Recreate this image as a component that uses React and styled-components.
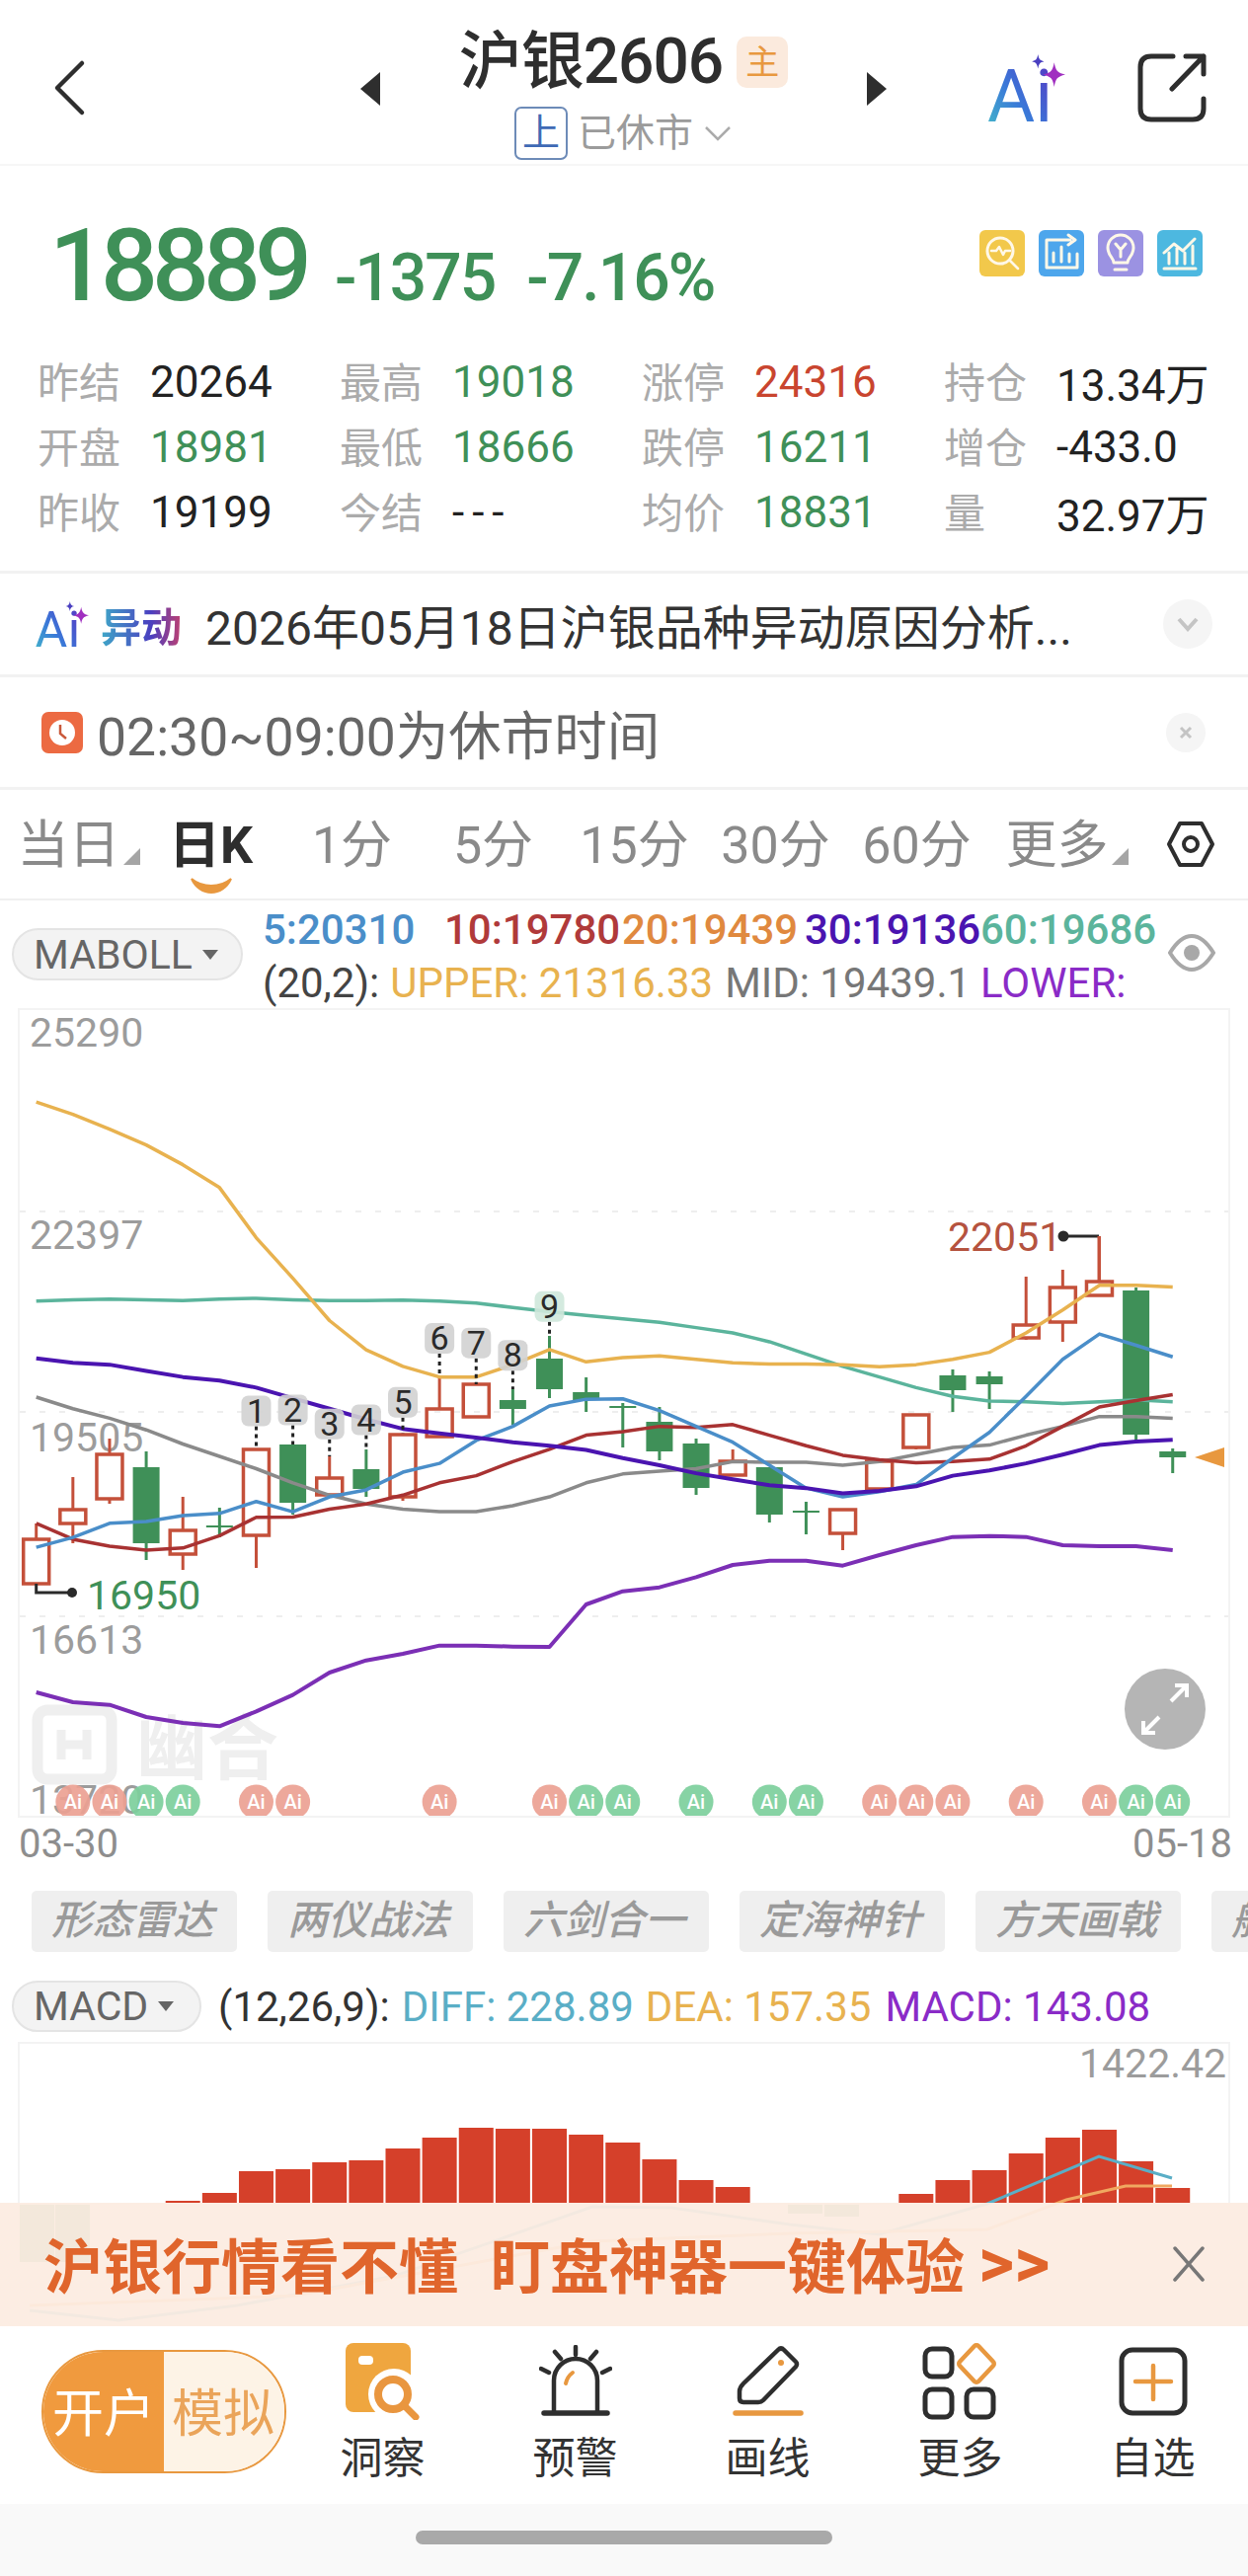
import React from 'react';
import styled, { createGlobalStyle } from 'styled-components';

const GlobalStyle = createGlobalStyle`
  html, body {
    margin: 0;
    padding: 0;
    background: #fff;
  }
  * {
    box-sizing: border-box;
  }
`;

const GREEN = '#3f9058';
const RED = '#c4503a';
const ORANGE = '#e8983f';
const DARK = '#2e2e2e';

const Page = styled.div`
  position: relative;
  width: 1264px;
  height: 2609px;
  overflow: hidden;
  display: flex;
  flex-direction: column;
  background: #fff;
  font-family: Roboto, "Noto Sans CJK SC", sans-serif;
  color: #222;
`;

/* header */
const Header = styled.div`
  height: 168px;
  flex: none;
  display: flex;
  align-items: center;
  border-bottom: 2px solid #f6f6f6;
`;

const BackBox = styled.div`
  width: 365px;
  padding: 12px 0 0 52px;
  display: flex;
`;

const SwitchArrow = styled.svg`
  margin-top: 14px;
  flex: none;
`;

const TitleBox = styled.div`
  flex: 1;
  height: 100%;
  padding-top: 33px;
  display: flex;
  flex-direction: column;
  align-items: center;
`;

const TitleRow = styled.div`
  height: 60px;
  display: flex;
  align-items: center;
  gap: 14px;
`;

const Title = styled.div`
  font-size: 64px;
  font-weight: 500;
  line-height: 60px;
  color: ${DARK};
  letter-spacing: -1px;
`;

const MainTag = styled.div`
  width: 52px;
  height: 52px;
  border-radius: 10px;
  background: #fbeadd;
  color: ${ORANGE};
  font-size: 34px;
  line-height: 52px;
  text-align: center;
`;

const SubRow = styled.div`
  margin-top: 15px;
  display: flex;
  align-items: center;
  gap: 10px;
  color: #9b9b9b;
  font-size: 39px;
  line-height: 54px;
`;

const ExchangeTag = styled.div`
  width: 54px;
  height: 54px;
  border: 2px solid #6d8bb8;
  border-radius: 7px;
  color: #3f6ab5;
  font-size: 38px;
  line-height: 48px;
  text-align: center;
`;

const HeaderIcons = styled.div`
  display: flex;
  align-items: center;
  padding: 12px 42px 0 103px;
  gap: 73px;
`;

/* quote */
const Quote = styled.div`
  height: 413px;
  flex: none;
  border-bottom: 3px solid #f2f2f2;
`;

const PriceRow = styled.div`
  height: 186px;
  padding: 46px 46px 0 50px;
  display: flex;
  align-items: flex-start;
  justify-content: space-between;
`;

const PriceGroup = styled.div`
  display: flex;
  align-items: baseline;
  color: ${GREEN};
  font-weight: 500;
`;

const Price = styled.div`
  font-size: 102px;
  line-height: 110px;
  letter-spacing: -6px;
`;

const Change = styled.div`
  margin-left: ${(p) => p.$gap}px;
  font-size: 66px;
  line-height: 70px;
  letter-spacing: -2px;
`;

const QuickIcons = styled.div`
  margin-top: 19px;
  display: flex;
  gap: 14px;
`;

const StatsGrid = styled.div`
  padding-left: 38px;
  display: grid;
  grid-template-columns: repeat(4, 306px);
  grid-auto-rows: 66px;
`;

const Stat = styled.div`
  display: flex;
  align-items: center;
`;

const StatLabel = styled.div`
  width: 114px;
  margin-bottom: 6px;
  font-size: 42px;
  color: #ababab;
`;

const StatValue = styled.div`
  font-size: 44px;
  color: ${(p) => p.$color};
  letter-spacing: ${(p) => (p.$spread ? '8px' : '0')};
`;

/* notice rows */
const NoticeRow = styled.div`
  height: ${(p) => p.$height}px;
  flex: none;
  padding-left: ${(p) => p.$left}px;
  display: flex;
  align-items: center;
  position: relative;
  border-bottom: 3px solid #f2f2f2;
`;

const AbnormalTag = styled.div`
  margin-left: 12px;
  font-size: 41px;
  font-weight: 700;
  background: linear-gradient(90deg, #3fa8c8 0%, #4a3fc0 62%, #c04070 100%);
  -webkit-background-clip: text;
  background-clip: text;
  color: transparent;
`;

const NoticeText = styled.div`
  margin-left: 24px;
  font-size: 48px;
  color: #333;
  white-space: nowrap;
`;

const ClosedText = styled.div`
  margin-left: 14px;
  font-size: 53.5px;
  color: #666;
  white-space: nowrap;
`;

const RoundButton = styled.div`
  position: absolute;
  right: ${(p) => p.$right}px;
  top: 50%;
  transform: translateY(-50%);
  width: ${(p) => p.$size}px;
  height: ${(p) => p.$size}px;
  border-radius: 50%;
  background: #f5f5f5;
  display: flex;
  align-items: center;
  justify-content: center;
`;

/* period tabs */
const Tabs = styled.div`
  height: 112px;
  flex: none;
  padding: 0 0 0 6px;
  display: flex;
  align-items: center;
  border-bottom: 2px solid #f0f0f0;
`;

const Tab = styled.div`
  position: relative;
  width: ${(p) => p.$width}px;
  height: 100%;
  padding-bottom: 8px;
  display: flex;
  align-items: center;
  justify-content: center;
  font-size: 52px;
  color: ${(p) => (p.$active ? DARK : '#8a8a8a')};
  font-weight: ${(p) => (p.$active ? 700 : 400)};
  white-space: nowrap;
`;

const TabLabel = styled.span`
  position: relative;
  margin-left: ${(p) => (p.$menu ? 10 : 0)}px;
  margin-right: ${(p) => (p.$menu ? 19 : 0)}px;
`;

const CornerMark = styled.span`
  position: absolute;
  right: -20px;
  bottom: 13px;
  width: 0;
  height: 0;
  border-left: 17px solid transparent;
  border-bottom: 17px solid #a5a5a5;
`;

const Smile = styled.svg`
  position: absolute;
  left: 50%;
  bottom: 3px;
  transform: translateX(-50%);
`;

const HexBox = styled.div`
  margin-left: 31px;
  display: flex;
`;

/* indicator rows */
const IndicatorRow = styled.div`
  height: 109px;
  flex: none;
  position: relative;
  padding-left: 266px;
  padding-top: 2px;
`;

const SelectPill = styled.div`
  position: absolute;
  left: ${(p) => p.$left}px;
  top: ${(p) => p.$top}px;
  width: ${(p) => p.$width}px;
  height: ${(p) => p.$height}px;
  border-radius: 27px;
  background: #f3f3f3;
  border: 2px solid #e4e4e4;
  padding-left: 20px;
  display: flex;
  align-items: center;
  gap: 10px;
  font-size: 41px;
  color: #666;
`;

const PillCaret = styled.span`
  width: 0;
  height: 0;
  border-left: 8px solid transparent;
  border-right: 8px solid transparent;
  border-top: 10px solid #666;
`;

const ValueLine = styled.div`
  height: 54px;
  display: flex;
  align-items: center;
  font-size: ${(p) => p.$size}px;
  font-weight: ${(p) => p.$weight || 400};
  white-space: nowrap;
`;

const MaValue = styled.span`
  width: ${(p) => p.$width}px;
  color: ${(p) => p.$color};
`;

const ParamValue = styled.span`
  margin-right: ${(p) => p.$gap || 0}px;
  color: ${(p) => p.$color};
`;

const EyeBox = styled.div`
  position: absolute;
  right: 33px;
  top: 33px;
  display: flex;
`;

/* charts */
const ChartBox = styled.div`
  height: ${(p) => p.$height}px;
  margin: 0 18px;
  flex: none;
  border: 2px solid #f3f3f3;
  overflow: hidden;
`;

const ChartSvg = styled.svg`
  display: block;
`;

const AxisText = styled.text`
  font-family: Roboto, sans-serif;
  font-size: 41px;
  fill: #9c9c9c;
`;

const PriceMark = styled.text`
  font-family: Roboto, sans-serif;
  font-size: 41px;
  fill: ${(p) => p.$color};
`;

const SeqText = styled.text`
  font-family: Roboto, sans-serif;
  font-size: 34px;
  fill: #2a2a2a;
  text-anchor: middle;
`;

const BadgeText = styled.text`
  font-family: Roboto, sans-serif;
  font-size: 20px;
  font-weight: 500;
  fill: #fff;
  text-anchor: middle;
`;

const Watermark = styled.text`
  font-family: "Noto Sans CJK SC", sans-serif;
  font-size: 72px;
  font-weight: 700;
  fill: #efefef;
`;

const DateRow = styled.div`
  height: 52px;
  flex: none;
  padding: 0 16px 0 19px;
  display: flex;
  align-items: center;
  justify-content: space-between;
  font-size: 40px;
  color: #8e8e8e;
`;

const ChipRow = styled.div`
  height: 84px;
  flex: none;
  padding: 22px 0 0 32px;
  display: flex;
  gap: 31px;
  overflow: hidden;
`;

const Chip = styled.div`
  width: 208px;
  height: 62px;
  flex: none;
  padding-left: 20px;
  border-radius: 5px;
  background: #efefef;
  color: #9a9a9a;
  font-size: 41px;
  font-style: italic;
  font-weight: 500;
  line-height: 60px;
  white-space: nowrap;
`;

const MacdRow = styled.div`
  height: 91px;
  flex: none;
  position: relative;
  padding: 28px 0 0 221px;
`;

/* banner over the lower chart */
const Banner = styled.div`
  position: absolute;
  left: 0;
  right: 0;
  bottom: 253px;
  height: 125px;
  padding: 0 0 4px 44px;
  display: flex;
  align-items: center;
  background: rgba(252, 236, 225, 0.95);
  color: #e0652c;
  font-size: 60px;
  font-weight: 700;
  white-space: nowrap;
`;

const BannerGap = styled.span`
  width: 33px;
`;

const BannerMore = styled.span`
  margin-left: 14px;
  font-size: 70px;
  line-height: 70px;
`;

const BannerClose = styled.div`
  position: absolute;
  right: 42px;
  top: 44px;
  display: flex;
`;

/* bottom bar */
const BottomBar = styled.div`
  height: 180px;
  flex: none;
  display: flex;
  background: #fff;
`;

const TradeToggle = styled.div`
  width: 248px;
  height: 125px;
  margin: 24px 0 0 42px;
  flex: none;
  display: flex;
  border: 2px solid ${ORANGE};
  border-radius: 63px;
  overflow: hidden;
  font-size: 52px;
`;

const TogglePart = styled.div`
  width: ${(p) => p.$width}px;
  padding: 0 0 4px ${(p) => p.$pad}px;
  display: flex;
  align-items: center;
  white-space: nowrap;
  background: ${(p) => (p.$on ? '#f09a3e' : '#fdf3e6')};
  color: ${(p) => (p.$on ? '#fff' : '#eaa45a')};
`;

const NavItem = styled.div`
  width: 195px;
  flex: none;
  padding-top: 16px;
  display: flex;
  flex-direction: column;
  align-items: center;
`;

const NavIcon = styled.div`
  height: 80px;
  display: flex;
  align-items: center;
`;

const NavLabel = styled.div`
  margin-top: 8px;
  font-size: 43px;
  line-height: 60px;
  color: #333;
`;

const Footer = styled.div`
  flex: 1;
  background: #f9f9f9;
  padding-top: 27px;
  display: flex;
  justify-content: center;
`;

const HomeBar = styled.div`
  width: 422px;
  height: 14px;
  border-radius: 7px;
  background: #a9a9a9;
`;

/* chart data, y values for the moving averages are taken in zoom units */
const cx = (i) => 36.7 + 37.13 * i;
const zy = (v) => 1000 + v / 2.8;

const MA_LINES = [
  { color: '#5bb49c', width: 3.5, ys: [890, 886, 884, 886, 888, 884, 882, 886, 888, 888, 887, 890, 895, 908, 920, 930, 940, 950, 965, 980, 1005, 1040, 1075, 1105, 1135, 1160, 1173, 1175, 1180, 1175, 1170, 1175] },
  { color: '#8a8a8a', width: 3.5, ys: [1162, 1195, 1222, 1255, 1295, 1330, 1365, 1405, 1440, 1465, 1480, 1487, 1487, 1470, 1445, 1405, 1380, 1372, 1365, 1345, 1347, 1347, 1355, 1345, 1325, 1305, 1298, 1270, 1245, 1217, 1217, 1222] },
  { color: '#a83232', width: 3.5, ys: [1520, 1565, 1585, 1596, 1590, 1555, 1503, 1502, 1480, 1465, 1440, 1405, 1385, 1345, 1310, 1270, 1260, 1245, 1248, 1240, 1270, 1300, 1327, 1340, 1348, 1345, 1338, 1300, 1245, 1190, 1172, 1155] },
  { color: '#4a8ec9', width: 3.5, ys: [1588, 1560, 1520, 1515, 1498, 1492, 1458, 1487, 1445, 1425, 1375, 1350, 1285, 1245, 1187, 1168, 1167, 1200, 1245, 1290, 1355, 1420, 1445, 1430, 1410, 1335, 1262, 1160, 1055, 983, 1015, 1048] },
  { color: '#e8b24f', width: 3.5, ys: [325, 360, 402, 447, 503, 568, 710, 825, 945, 1028, 1075, 1105, 1105, 1070, 1027, 1062, 1050, 1045, 1055, 1065, 1068, 1068, 1070, 1076, 1070, 1055, 1035, 980, 915, 845, 845, 850] },
  { color: '#4a14b0', width: 4, ys: [1052, 1065, 1070, 1088, 1105, 1115, 1135, 1165, 1195, 1225, 1252, 1265, 1277, 1290, 1300, 1312, 1335, 1355, 1378, 1395, 1412, 1420, 1435, 1428, 1415, 1385, 1370, 1350, 1325, 1298, 1288, 1283] },
];

const LOWER_BAND = [462, 492, 500, 537, 555, 565, 520, 470, 402, 365, 345, 320, 320, 323, 324, 195, 155, 143, 112, 75, 62, 62, 77, 45, 15, -10, -13, -10, 15, 18, 18, 30];

// [up, high, top, bottom, low]
const CANDLES = [
  [1, 1543, 1559, 1604, 1604], [1, 1496, 1529, 1543, 1563], [1, 1457, 1473, 1518, 1523], [0, 1470, 1486, 1563, 1580],
  [1, 1516, 1550, 1574, 1590], [0, 1527, 1545, 1547, 1557], [1, 1468, 1468, 1555, 1588], [0, 1463, 1463, 1522, 1534],
  [1, 1475, 1497, 1514, 1514], [0, 1468, 1488, 1508, 1516], [1, 1452, 1453, 1516, 1520], [1, 1393, 1427, 1455, 1455],
  [1, 1402, 1402, 1435, 1435], [0, 1407, 1418, 1427, 1443], [0, 1353, 1376, 1407, 1416], [0, 1395, 1410, 1418, 1430],
  [0, 1421, 1424, 1426, 1466], [0, 1425, 1440, 1470, 1479], [0, 1457, 1462, 1507, 1514], [1, 1468, 1480, 1494, 1494],
  [0, 1486, 1486, 1534, 1542], [0, 1521, 1530, 1532, 1554], [1, 1529, 1529, 1553, 1570], [1, 1478, 1480, 1508, 1512],
  [1, 1433, 1433, 1466, 1468], [0, 1387, 1393, 1408, 1430], [0, 1389, 1394, 1402, 1427], [1, 1293, 1342, 1355, 1357],
  [1, 1286, 1304, 1339, 1359], [1, 1252, 1298, 1312, 1312], [0, 1304, 1307, 1453, 1461], [0, 1467, 1470, 1476, 1492],
];

const SEQ_TOPS = [1158, 1155, 1195, 1183, 1133, 952, 965, 1000, 862];

const AI_BADGES = [
  [1, 1], [2, 1], [3, 0], [4, 0], [6, 1], [7, 1], [11, 1], [14, 1], [15, 0], [16, 0],
  [18, 0], [20, 0], [21, 0], [23, 1], [24, 1], [25, 1], [27, 1], [29, 1], [30, 0], [31, 0],
];

const MACD_BARS = [
  [4, 2229], [5, 2221], [6, 2199], [7, 2197], [8, 2190], [9, 2188], [10, 2176], [11, 2165], [12, 2155], [13, 2156],
  [14, 2156], [15, 2162], [16, 2170], [17, 2187], [18, 2208], [19, 2215], [24, 2222], [25, 2208], [26, 2198],
  [27, 2181], [28, 2165], [29, 2157], [30, 2189], [31, 2216],
];

const STATS = [
  ['昨结', '20264', '#222'], ['最高', '19018', GREEN], ['涨停', '24316', '#c9452f'], ['持仓', '13.34万', '#222'],
  ['开盘', '18981', GREEN], ['最低', '18666', GREEN], ['跌停', '16211', GREEN], ['增仓', '-433.0', '#222'],
  ['昨收', '19199', '#222'], ['今结', '---', '#222'], ['均价', '18831', GREEN], ['量', '32.97万', '#222'],
];

const PERIODS = ['当日', '日K', '1分', '5分', '15分', '30分', '60分', '更多'];
const TAB_WIDTHS = [136, 143, 143, 143, 143, 143, 143, 150];
const CHIPS = ['形态雷达', '两仪战法', '六剑合一', '定海神针', '方天画戟', '航'];

const points = (pairs) => pairs.map((p) => p.join(',')).join(' ');

function Candle({ data, i }) {
  const [up, high, top, bottom, low] = data;
  const x = cx(i);
  const color = up ? RED : GREEN;
  return (
    <g>
      <line x1={x} x2={x} y1={high} y2={top} stroke={color} strokeWidth="3" />
      <line x1={x} x2={x} y1={bottom} y2={low} stroke={color} strokeWidth="3" />
      {up ? (
        <rect x={x - 13} y={top} width="26" height={bottom - top} fill="none" stroke={color} strokeWidth="3.5" />
      ) : (
        <rect x={x - 13.5} y={top} width="27" height={bottom - top} fill={color} />
      )}
    </g>
  );
}

function KlineChart() {
  return (
    <ChartSvg width="1224" height="816" viewBox="20 1023 1224 816">
      {[1227, 1430, 1637].map((y) => (
        <line key={y} x1="20" x2="1244" y1={y} y2={y} stroke="#eeeeee" strokeWidth="2" strokeDasharray="6 14" />
      ))}
      <AxisText x="30" y="1060">25290</AxisText>
      <AxisText x="30" y="1265">22397</AxisText>
      <AxisText x="30" y="1470">19505</AxisText>
      <AxisText x="30" y="1675">16613</AxisText>
      <AxisText x="30" y="1837">13720</AxisText>

      <rect x="38" y="1732" width="75" height="70" rx="10" fill="none" stroke="#efefef" strokeWidth="11" />
      <path d="M62 1752v30M88 1752v30M62 1767h26" fill="none" stroke="#efefef" strokeWidth="9" />
      <Watermark x="138" y="1796">幽合</Watermark>

      {CANDLES.map((c, i) => <Candle key={i} data={c} i={i} />)}
      {MA_LINES.map((l) => (
        <polyline
          key={l.color}
          points={points(l.ys.map((v, i) => [cx(i), zy(v)]))}
          fill="none"
          stroke={l.color}
          strokeWidth={l.width}
          strokeLinejoin="round"
        />
      ))}
      <polyline
        points={points(LOWER_BAND.map((v, i) => [cx(i), 1560 + v / 3]))}
        fill="none"
        stroke="#7b2fb5"
        strokeWidth="4"
        strokeLinejoin="round"
      />

      {SEQ_TOPS.map((t, n) => {
        const i = n + 6;
        const top = zy(t);
        const tint = n === 8 ? '#cfe8dc' : '#d2d2d2';
        return (
          <g key={n}>
            <line x1={cx(i)} x2={cx(i)} y1={top + 31} y2={CANDLES[i][1]} stroke="#222" strokeWidth="3" strokeDasharray="4 4" />
            <rect x={cx(i) - 15} y={top} width="30" height="31" rx="7" fill={tint} fillOpacity="0.9" />
            <SeqText x={cx(i)} y={top + 27}>{n + 1}</SeqText>
          </g>
        );
      })}

      <polyline points="36.7,1604 36.7,1613 73,1613" fill="none" stroke="#2a2a2a" strokeWidth="3" />
      <circle cx="73" cy="1613" r="5" fill="#2a2a2a" />
      <PriceMark x="88" y="1630" $color={GREEN}>16950</PriceMark>
      <polyline points="1113,1252 1077,1252" fill="none" stroke="#2a2a2a" strokeWidth="3" />
      <line x1="1113" x2="1113" y1="1252" y2="1298" stroke={RED} strokeWidth="3" />
      <circle cx="1077" cy="1252" r="5.5" fill="#2a2a2a" />
      <PriceMark x="960" y="1267" $color="#b5533f">22051</PriceMark>
      <polygon points="1210,1476 1240,1466 1240,1486" fill={ORANGE} />

      <circle cx="1180" cy="1731" r="41" fill="#b5b5b5" />
      <path d="M1186 1723l16-16M1190 1707h12v12M1174 1739l-16 16M1170 1755h-12v-12" fill="none" stroke="#fff" strokeWidth="4" />

      {AI_BADGES.map(([i, up]) => (
        <g key={i}>
          <circle cx={cx(i)} cy="1825" r="17.5" fill={up ? '#eca192' : '#7dcf9c'} fillOpacity="0.92" />
          <BadgeText x={cx(i)} y="1832">Ai</BadgeText>
        </g>
      ))}
    </ChartSvg>
  );
}

function MacdChart() {
  return (
    <ChartSvg width="1224" height="286" viewBox="20 2070 1224 286">
      <AxisText x="1093" y="2104">1422.42</AxisText>
      {MACD_BARS.map(([i, top]) => (
        <rect key={i} x={cx(i) - 17.5} y={top} width="35" height={2231 - top} fill="#d5402a" />
      ))}
      <rect x="20" y="2233" width="35" height="58" fill="#4f9a66" />
      <rect x="56" y="2233" width="35" height="58" fill="#4f9a66" />
      <rect x="798" y="2233" width="35" height="9" fill="#4f9a66" />
      <rect x="835" y="2233" width="35" height="12" fill="#4f9a66" />
      <polyline points="30,2340 120,2350 240,2335 400,2305 600,2235 680,2236 800,2253 890,2263 1000,2232 1113,2184 1187,2206" fill="none" stroke="#5aaec6" strokeWidth="3" />
      <polyline points="30,2335 300,2325 600,2270 800,2262 1000,2258 1080,2228 1140,2214 1187,2214" fill="none" stroke="#f0a860" strokeWidth="3" />
    </ChartSvg>
  );
}

function AiMark({ id, size }) {
  return (
    <svg width={size} height={size * 0.87} viewBox="0 0 76 66">
      <defs>
        <linearGradient id={id} x1="0" y1="1" x2="1" y2="0">
          <stop offset="0" stopColor="#45c0c8" />
          <stop offset="0.45" stopColor="#3a78d8" />
          <stop offset="1" stopColor="#5a2fc0" />
        </linearGradient>
      </defs>
      <text x="-1" y="66" fontFamily="Roboto, sans-serif" fontSize="72" fill={`url(#${id})`}>Ai</text>
      <path d="M49 0c1 5 2 6 6 7-4 1-5 2-6 7-1-5-2-6-6-7 4-1 5-2 6-7z" fill="#4a3fc0" />
      <path d="M65 8c1.500 8 3 10 11 12-8 2-9.500 4-11 12-1.500-8-3-10-11-12 8-2 9.500-4 11-12z" fill="#a02fc0" />
    </svg>
  );
}

function QuickIcon({ color, children }) {
  return (
    <svg width="46" height="47" viewBox="0 0 46 47">
      <rect width="46" height="47" rx="6" fill={color} />
      <g fill="none" stroke="#fff8e8" strokeWidth="3" strokeLinecap="round" strokeLinejoin="round">{children}</g>
    </svg>
  );
}

export default function App() {
  return (
    <Page>
      <GlobalStyle />
      <Header>
        <BackBox>
          <svg width="36" height="58" viewBox="0 0 36 58">
            <path d="M31 4L6 29l25 25" fill="none" stroke={DARK} strokeWidth="4.500" strokeLinecap="round" strokeLinejoin="round" />
          </svg>
        </BackBox>
        <SwitchArrow width="20" height="34" viewBox="0 0 20 34"><path d="M20 0v34L0 17z" fill={DARK} /></SwitchArrow>
        <TitleBox>
          <TitleRow>
            <Title>沪银2606</Title>
            <MainTag>主</MainTag>
          </TitleRow>
          <SubRow>
            <ExchangeTag>上</ExchangeTag>
            已休市
            <svg width="30" height="18" viewBox="0 0 30 18">
              <path d="M3 3l12 12L27 3" fill="none" stroke="#ababab" strokeWidth="2.500" />
            </svg>
          </SubRow>
        </TitleBox>
        <SwitchArrow width="20" height="34" viewBox="0 0 20 34"><path d="M0 0v34l20-17z" fill={DARK} /></SwitchArrow>
        <HeaderIcons>
          <AiMark id="aiHead" size={78} />
          <svg width="70" height="70" viewBox="0 0 70 70">
            <path d="M36 3H14Q3 3 3 14v42q0 11 11 11h42q11 0 11-11V46" fill="none" stroke={DARK} strokeWidth="5" strokeLinecap="round" />
            <path d="M49 3h18v18M67 3L35 36" fill="none" stroke={DARK} strokeWidth="5" strokeLinecap="round" strokeLinejoin="round" />
          </svg>
        </HeaderIcons>
      </Header>

      <Quote>
        <PriceRow>
          <PriceGroup>
            <Price>18889</Price>
            <Change $gap={29}>-1375</Change>
            <Change $gap={32}>-7.16%</Change>
          </PriceGroup>
          <QuickIcons>
            <QuickIcon color="#f2c84b">
              <circle cx="21" cy="21" r="13" />
              <path d="M12 21h5l3-4 4 8 2-4h5M31 31l8 8" strokeWidth="2.500" />
            </QuickIcon>
            <QuickIcon color="#4da6ec">
              <path d="M32 10H8v28h31V24M15 32V23M23 32V17M31 32V24M30 5l7 5-7 5" />
            </QuickIcon>
            <QuickIcon color="#9b92e2">
              <path d="M16 33c0-5-6-7-6-15a13 13 0 0 1 26 0c0 8-6 10-6 15zM17 40h12M18 14l5 6 5-6M23 20v7" />
            </QuickIcon>
            <QuickIcon color="#4db8e0">
              <path d="M7 39h32M12 34V23M20 34V18M28 34V23M36 34V16M7 23l10-9 9 7 12-12" />
            </QuickIcon>
          </QuickIcons>
        </PriceRow>
        <StatsGrid>
          {STATS.map(([label, value, color]) => (
            <Stat key={label}>
              <StatLabel>{label}</StatLabel>
              <StatValue $color={color} $spread={value === '---'}>{value}</StatValue>
            </Stat>
          ))}
        </StatsGrid>
      </Quote>

      <NoticeRow $height={105} $left={36}>
        <AiMark id="aiNotice" size={54} />
        <AbnormalTag>异动</AbnormalTag>
        <NoticeText>2026年05月18日沪银品种异动原因分析...</NoticeText>
        <RoundButton $right={36} $size={50}>
          <svg width="24" height="16" viewBox="0 0 24 16"><path d="M3 3l9 10 9-10" fill="none" stroke="#c4c4c4" strokeWidth="4" /></svg>
        </RoundButton>
      </NoticeRow>

      <NoticeRow $height={114} $left={42}>
        <svg width="42" height="42" viewBox="0 0 42 42">
          <rect width="42" height="42" rx="7" fill="#ec6a42" />
          <circle cx="21" cy="21" r="13" fill="#fff" />
          <path d="M19 13v9l6 5" fill="none" stroke="#c9583a" strokeWidth="2.500" />
        </svg>
        <ClosedText>02:30~09:00为休市时间</ClosedText>
        <RoundButton $right={43} $size={40}>
          <svg width="16" height="16" viewBox="0 0 16 16"><path d="M3 3l10 10M13 3L3 13" stroke="#c4c4c4" strokeWidth="3" /></svg>
        </RoundButton>
      </NoticeRow>

      <Tabs>
        {PERIODS.map((p, i) => (
          <Tab key={p} $active={i === 1} $width={TAB_WIDTHS[i]}>
            <TabLabel $menu={i === 0 || i === 7}>
              {p}
              {(i === 0 || i === 7) && <CornerMark />}
            </TabLabel>
            {i === 1 && (
              <Smile width="42" height="18" viewBox="0 0 42 18">
                <path d="M1 1c4 9 12 14 20 14s16-5 20-14c-6 5-12 7-20 7S7 6 1 1z" fill={ORANGE} stroke={ORANGE} strokeWidth="2" />
              </Smile>
            )}
          </Tab>
        ))}
        <HexBox>
          <svg width="50" height="50" viewBox="0 0 50 50">
            <path d="M14 4h22l11 21-11 21H14L3 25z" fill="none" stroke={DARK} strokeWidth="4" strokeLinejoin="round" />
            <circle cx="25" cy="25" r="7" fill="none" stroke={DARK} strokeWidth="4" />
          </svg>
        </HexBox>
      </Tabs>

      <IndicatorRow>
        <SelectPill $left={12} $top={28} $width={234} $height={53}>MABOLL<PillCaret /></SelectPill>
        <ValueLine $size={42} $weight={500}>
          <MaValue $width={184} $color="#4a8ec9">5:20310</MaValue>
          <MaValue $width={180} $color="#b03a3a">10:19780</MaValue>
          <MaValue $width={185} $color="#e0893f">20:19439</MaValue>
          <MaValue $width={178} $color="#4a14b0">30:19136</MaValue>
          <MaValue $width={183} $color="#5bb49c">60:19686</MaValue>
        </ValueLine>
        <ValueLine $size={42}>
          <ParamValue $gap={11} $color="#444">(20,2):</ParamValue>
          <ParamValue $gap={12} $color="#e8b24f">UPPER: 21316.33</ParamValue>
          <ParamValue $gap={10} $color="#777">MID: 19439.1</ParamValue>
          <ParamValue $color="#8a2bc7">LOWER:</ParamValue>
        </ValueLine>
        <EyeBox>
          <svg width="48" height="40" viewBox="0 0 48 40">
            <path d="M2 20C10 7 17 3 24 3s14 4 22 17c-8 13-15 17-22 17S10 33 2 20z" fill="none" stroke="#a8a8a8" strokeWidth="4" />
            <circle cx="24" cy="20" r="8" fill="#a8a8a8" />
          </svg>
        </EyeBox>
      </IndicatorRow>

      <ChartBox $height={820}>
        <KlineChart />
      </ChartBox>
      <DateRow>
        <span>03-30</span>
        <span>05-18</span>
      </DateRow>
      <ChipRow>
        {CHIPS.map((c) => <Chip key={c}>{c}</Chip>)}
      </ChipRow>
      <MacdRow>
        <SelectPill $left={12} $top={29} $width={192} $height={52}>MACD<PillCaret /></SelectPill>
        <ValueLine $size={42}>
          <ParamValue $gap={12} $color="#333">(12,26,9):</ParamValue>
          <ParamValue $gap={12} $color="#5aaec6">DIFF: 228.89</ParamValue>
          <ParamValue $gap={14} $color="#e8b24f">DEA: 157.35</ParamValue>
          <ParamValue $color="#8a2bc7">MACD: 143.08</ParamValue>
        </ValueLine>
      </MacdRow>
      <ChartBox $height={288}>
        <MacdChart />
      </ChartBox>

      <Banner>
        沪银行情看不懂<BannerGap />盯盘神器一键体验<BannerMore>&gt;&gt;</BannerMore>
        <BannerClose>
          <svg width="36" height="36" viewBox="0 0 36 36">
            <path d="M4 2l28 32M32 2L4 34" stroke="#777" strokeWidth="3.500" strokeLinecap="round" />
          </svg>
        </BannerClose>
      </Banner>

      <BottomBar>
        <TradeToggle>
          <TogglePart $on $width={124} $pad={9}>开户</TogglePart>
          <TogglePart $width={124} $pad={8}>模拟</TogglePart>
        </TradeToggle>
        <NavItem>
          <NavIcon>
            <svg width="76" height="78" viewBox="0 0 76 78">
              <rect x="0" y="0" width="66" height="70" rx="8" fill="#efa63f" />
              <rect x="13" y="13" width="15" height="9" rx="4" fill="#fff" />
              <circle cx="49" cy="52" r="26" fill="#fff" />
              <circle cx="48" cy="52" r="15" fill="#fff" stroke="#e9963f" strokeWidth="8" />
              <path d="M60 64l11 11" stroke="#e9963f" strokeWidth="7" strokeLinecap="round" />
            </svg>
          </NavIcon>
          <NavLabel>洞察</NavLabel>
        </NavItem>
        <NavItem>
          <NavIcon>
            <svg width="74" height="74" viewBox="0 0 74 74">
              <path d="M15 68V36a22 22 0 0 1 44 0v32" fill="none" stroke={DARK} strokeWidth="4.500" />
              <path d="M5 69h64" stroke={DARK} strokeWidth="5.500" strokeLinecap="round" />
              <path d="M37 2v8M16 7l6 7M58 7l-6 7M2 24l8 4M72 24l-8 4" stroke={DARK} strokeWidth="4.500" strokeLinecap="round" />
              <path d="M27 39c1-5 3-8 7-11" fill="none" stroke={ORANGE} strokeWidth="4" strokeLinecap="round" />
            </svg>
          </NavIcon>
          <NavLabel>预警</NavLabel>
        </NavItem>
        <NavItem>
          <NavIcon>
            <svg width="72" height="76" viewBox="0 0 72 76">
              <path d="M46 6L11 40Q7 44 7 48V55Q7 59 11 59H26Q29 59 31 57L64 23Q66 20 64 18L52 6Q49 3 46 6Z" fill="none" stroke={DARK} strokeWidth="4.500" strokeLinejoin="round" />
              <circle cx="49" cy="19" r="3" fill={ORANGE} />
              <path d="M3 70h66" stroke={ORANGE} strokeWidth="5.500" strokeLinecap="round" />
            </svg>
          </NavIcon>
          <NavLabel>画线</NavLabel>
        </NavItem>
        <NavItem>
          <NavIcon>
            <svg width="78" height="78" viewBox="0 0 78 78">
              <rect x="3" y="6" width="27" height="28" rx="7" fill="none" stroke={DARK} strokeWidth="5" />
              <rect x="3" y="47" width="27" height="28" rx="7" fill="none" stroke={DARK} strokeWidth="5" />
              <rect x="45" y="47" width="27" height="28" rx="7" fill="none" stroke={DARK} strokeWidth="5" />
              <path d="M57 3l15 16c1 1 1 3 0 4L57 39c-1 1-3 1-4 0L38 23c-1-1-1-3 0-4L53 3c1-1 3-1 4 0z" fill="none" stroke={ORANGE} strokeWidth="4.500" />
            </svg>
          </NavIcon>
          <NavLabel>更多</NavLabel>
        </NavItem>
        <NavItem>
          <NavIcon>
            <svg width="70" height="70" viewBox="0 0 70 70">
              <rect x="3" y="3" width="64" height="64" rx="11" fill="none" stroke={DARK} strokeWidth="5" />
              <path d="M35 19v34M17 35h36" stroke={ORANGE} strokeWidth="4.500" strokeLinecap="round" />
            </svg>
          </NavIcon>
          <NavLabel>自选</NavLabel>
        </NavItem>
      </BottomBar>
      <Footer>
        <HomeBar />
      </Footer>
    </Page>
  );
}
